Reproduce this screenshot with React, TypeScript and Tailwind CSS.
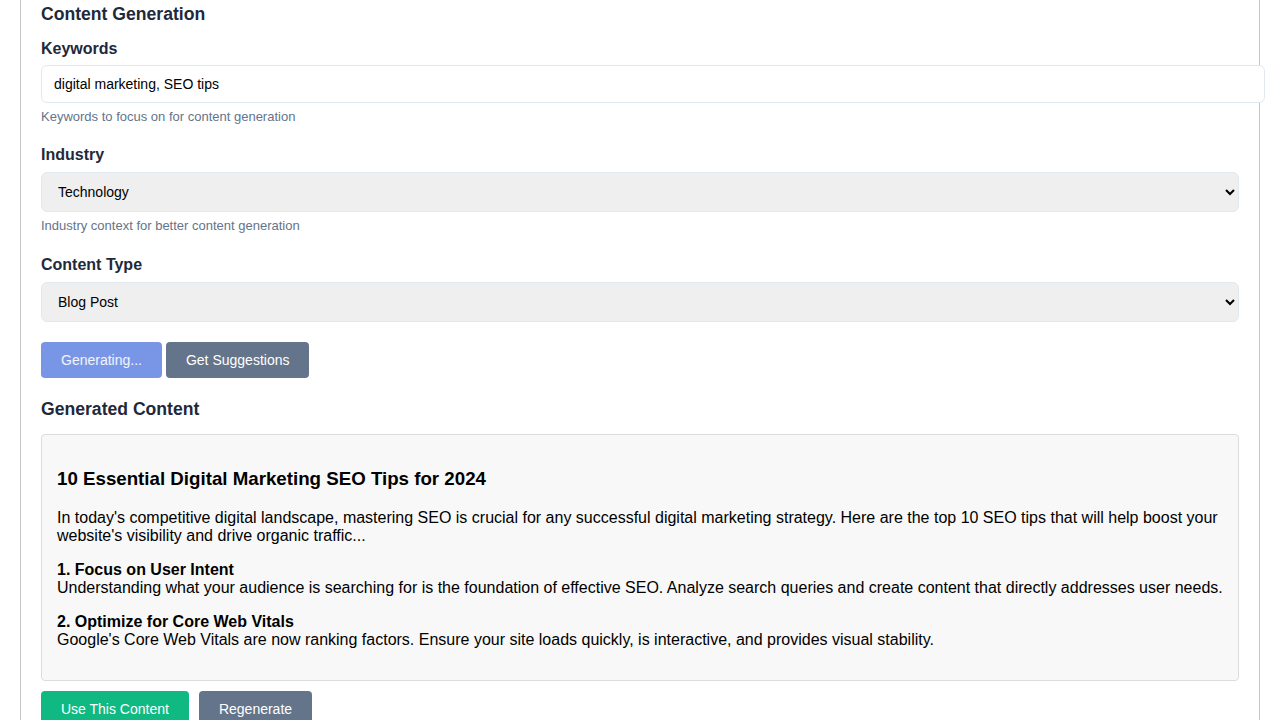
import React from "react";

export default function App() {
  return (
    <div className="min-h-screen bg-white font-['Liberation_Sans',Arial,sans-serif]">
      <div className="mx-auto w-[1240px] min-h-screen border-x border-[#c8c8c8] px-5">
        {/* Content Generation */}
        <h3 className="pt-[4px] text-[17.6px] leading-[21px] font-bold text-[#1e293b]">
          Content Generation
        </h3>

        <div className="mt-[15px]">
          <label className="block text-[16px] leading-[18px] font-bold text-[#1e293b] mb-[7px]">
            Keywords
          </label>
          <input
            type="text"
            defaultValue="digital marketing, SEO tips"
            className="block w-[1224px] h-[38px] px-3 border border-[#e2e8f0] rounded-md bg-white text-[14px] text-black outline-none"
          />
          <p className="mt-[6px] text-[13px] leading-[15px] text-[#64748b]">
            Keywords to focus on for content generation
          </p>
        </div>

        <div className="mt-[22px]">
          <label className="block text-[16px] leading-[18px] font-bold text-[#1e293b] mb-[8px]">
            Industry
          </label>
          <select
            defaultValue="Technology"
            className="block w-full h-[40px] px-3 border border-[#e2e8f0] rounded-md bg-[#efefef] text-[14px] text-black outline-none"
          >
            <option>Technology</option>
            <option>Healthcare</option>
            <option>Finance</option>
          </select>
          <p className="mt-[6px] text-[13px] leading-[15px] text-[#64748b]">
            Industry context for better content generation
          </p>
        </div>

        <div className="mt-[23px]">
          <label className="block text-[16px] leading-[18px] font-bold text-[#1e293b] mb-[8px]">
            Content Type
          </label>
          <select
            defaultValue="Blog Post"
            className="block w-full h-[40px] px-3 border border-[#e2e8f0] rounded-md bg-[#efefef] text-[14px] text-black outline-none"
          >
            <option>Blog Post</option>
            <option>Social Media</option>
            <option>Email</option>
          </select>
        </div>

        <div className="mt-[20px] flex gap-[4px]">
          <button className="h-[36px] px-5 rounded bg-[#7996e6] text-[14px] text-white/90">
            Generating...
          </button>
          <button className="h-[36px] px-5 rounded bg-[#64748b] text-[14px] text-white">
            Get Suggestions
          </button>
        </div>

        {/* Generated Content */}
        <h3 className="mt-[21px] text-[17.6px] leading-[21px] font-bold text-[#1e293b]">
          Generated Content
        </h3>

        <div className="mt-[14px] border border-[#dcdcdc] rounded bg-[#f8f8f8] px-[15px] pt-[33px] pb-[31px] text-black">
          <h3 className="text-[18.72px] leading-[22px] font-bold">
            10 Essential Digital Marketing SEO Tips for 2024
          </h3>
          <p className="mt-[19px] text-[16px] leading-[18px]">
            In today's competitive digital landscape, mastering SEO is crucial for any successful digital marketing
            strategy. Here are the top 10 SEO tips that will help boost your website's visibility and drive organic
            traffic...
          </p>
          <p className="mt-[16px] text-[16px] leading-[18px]">
            <strong>1. Focus on User Intent</strong>
            <br />
            Understanding what your audience is searching for is the foundation of effective SEO. Analyze search queries
            and create content that directly addresses user needs.
          </p>
          <p className="mt-[16px] text-[16px] leading-[18px]">
            <strong>2. Optimize for Core Web Vitals</strong>
            <br />
            Google's Core Web Vitals are now ranking factors. Ensure your site loads quickly, is interactive, and provides
            visual stability.
          </p>
        </div>

        <div className="mt-[10px] flex gap-[10px] pb-4">
          <button className="h-[36px] px-5 rounded bg-[#10b981] text-[14px] text-white">
            Use This Content
          </button>
          <button className="h-[36px] px-5 rounded bg-[#64748b] text-[14px] text-white">
            Regenerate
          </button>
        </div>
      </div>
    </div>
  );
}
